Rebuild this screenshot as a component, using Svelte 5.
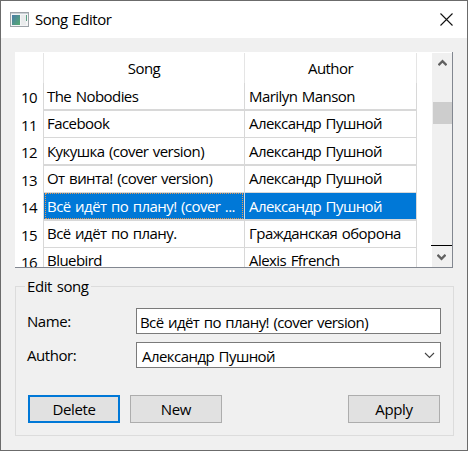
<script>
  const rows = [
    { n: 10, song: 'The Nobodies', author: 'Marilyn Manson', h: 28, line: 2 },
    { n: 11, song: 'Facebook', author: 'Александр Пушной', h: 27, line: 1 },
    { n: 12, song: 'Кукушка (cover version)', author: 'Александр Пушной', h: 28, line: 2 },
    { n: 13, song: 'От винта! (cover version)', author: 'Александр Пушной', h: 27, line: 1 },
    { n: 14, song: 'Всё идёт по плану! (cover ...', author: 'Александр Пушной', h: 28, line: 2, selected: true },
    { n: 15, song: 'Всё идёт по плану.', author: 'Гражданская оборона', h: 27, line: 1 },
    { n: 16, song: 'Bluebird', author: 'Alexis Ffrench', h: 28, line: 1 }
  ];
  let name = $state('Всё идёт по плану! (cover version)');
</script>

<div class="window">
  <header>
    <svg class="app" width="19" height="15" viewBox="0 0 19 15">
      <defs>
        <linearGradient id="pane" x1="0" y1="0" x2="1" y2="1">
          <stop offset="0" stop-color="#4a7ba8" /><stop offset="1" stop-color="#55ab70" />
        </linearGradient>
      </defs>
      <rect x=".5" y=".5" width="18" height="14" fill="#f4f5f6" stroke="#9da3a8" />
      <rect x="1" y="1" width="17" height="1" fill="#c9d0d5" />
      <rect x="2" y="3" width="8" height="10" fill="url(#pane)" />
      <rect x="11" y="3" width="5" height="10" fill="#e9ebec" />
      <rect x="16" y="3" width="1" height="6" fill="#5aa184" />
    </svg>
    <h1>Song Editor</h1>
    <svg class="close" width="13" height="13" viewBox="0 0 13 13"><path d="M.5 .5l12 12M12.5 .5l-12 12" stroke="#111" stroke-width="1.1" /></svg>
  </header>

  <section class="list">
    <div class="table">
      <div class="row head">
        <span class="num"></span><span class="song">Song</span><span class="author">Author</span>
      </div>
      {#each rows as r}
        <div class="row" class:selected={r.selected} class:thick={r.line === 2} style:height="{r.h}px">
          <span class="num">{r.n}</span><span class="song">{r.song}</span><span class="author">{r.author}</span>
        </div>
      {/each}
    </div>
    <div class="scroll">
      <svg class="up" width="9" height="8" viewBox="0 0 9 8"><path d="M.5 6.2l4-4 4 4" fill="none" stroke="#606060" stroke-width="2.3" /></svg>
      <div class="thumb"></div>
      <div class="down">
        <svg width="9" height="8" viewBox="0 0 9 8"><path d="M.5 1.8l4 4 4-4" fill="none" stroke="#606060" stroke-width="2.3" /></svg>
      </div>
    </div>
  </section>

  <fieldset>
    <legend>Edit song</legend>
    <div class="field"><label for="name">Name:</label><input id="name" bind:value={name} /></div>
    <div class="field">
      <span class="label">Author:</span>
      <div class="combo">
        <span>Александр Пушной</span>
        <svg width="11" height="7" viewBox="0 0 11 7"><path d="M1 1l4.5 4.5L10 1" fill="none" stroke="#444" stroke-width="1.1" /></svg>
      </div>
    </div>
    <div class="buttons">
      <button class="default">Delete</button><button>New</button><button class="apply">Apply</button>
    </div>
  </fieldset>
</div>

<style>
  .window, .window * { box-sizing: border-box; }
  .window {
    width: 468px; height: 451px; overflow: hidden;
    display: flex; flex-direction: column;
    border: 1px solid #6b6b6b; background: #f0f0f0; color: #000;
    font: 15px/20px "Open Sans", "Noto Sans", sans-serif;
    letter-spacing: -0.55px; word-spacing: 1.1px; white-space: nowrap;
  }
  header { display: flex; align-items: center; height: 37px; padding: 0 14px 0 9px; background: #fff; flex: none; }
  .app { margin-top: -1px; }
  h1 { margin: -2px auto 0 6px; font: inherit; letter-spacing: -0.45px; }
  .close { display: block; margin-top: -1px; }
  .list {
    display: flex; flex: none; width: 438px; height: 216px; margin: 14px 0 0 14px;
    background: #fff; border: solid #828790; border-width: 0 1px 1px 0; overflow: hidden;
  }
  .table { width: 402px; flex: none; }
  .row { display: flex; }
  .row > span { flex: none; border-right: 1px solid #d8d8d8; }
  .num { width: 29px; padding: 4px 6px 0 0; text-align: right; border-bottom: 0; }
  .song, .author { padding: 2px 0 0 3px; border-bottom: 1px solid #d8d8d8; }
  .song { width: 201px; }
  .author { width: 172px; padding-left: 4px; }
  .thick .song, .thick .author { border-bottom-width: 2px; padding-top: 3px; }
  .head { height: 31px; padding-top: 1px; }
  .head > span { padding: 5px 0 0; text-align: center; border-bottom: 0; border-color: #e5e5e5; }
  .selected .song, .selected .author { background: #0078d7; background-clip: padding-box; color: #fff; }
  .selected .song { position: relative; }
  .selected .song::after { content: ""; position: absolute; inset: 0 1px 0 1px; border: 1px dotted #e59a55; }
  .scroll { display: flex; flex-direction: column; width: 20px; margin: 1px 0 0 auto; background: #f0f0f0; align-items: center; }
  .up { margin-top: 6px; flex: none; }
  .thumb { width: 19px; height: 22px; margin-top: 35px; background: #cdcdcd; flex: none; }
  .down { display: flex; justify-content: center; width: 22px; height: 22px; margin: auto 0 0 -1px; padding-top: 7px; border-top: 1px solid #000; }
  fieldset {
    position: relative; width: 439px; height: 150px; margin: 18px 0 0 14px; padding: 21px 12px 0;
    border: 1px solid #dcdcdc; min-width: 0;
  }
  legend { position: absolute; top: -11px; left: 9px; padding: 0 2px; background: #f0f0f0; letter-spacing: -0.4px; }
  .field { display: flex; align-items: center; height: 26px; margin-bottom: 8px; }
  label, .label { width: 109px; margin-left: -1px; flex: none; letter-spacing: -0.45px; }
  input, .combo { width: 305px; height: 26px; border: 1px solid #7a7a7a; background: #fff; }
  input { padding: 1px 3px 0; margin: 0; font: inherit; letter-spacing: -0.58px; word-spacing: inherit; color: inherit; outline: 0; border-radius: 0; }
  .combo { display: flex; align-items: center; justify-content: space-between; padding: 1px 5px 0 5px; }
  .combo svg { margin-top: -1px; }
  .buttons { display: flex; gap: 10px; margin-top: 27px; }
  button { width: 92px; height: 28px; padding: 0; border: 1px solid #adadad; border-radius: 0; background: #e1e1e1; color: #000; font: inherit; letter-spacing: -0.35px; }
  .default { border: 2px solid #0078d7; }
  .apply { margin-left: auto; margin-right: 1px; }
</style>
